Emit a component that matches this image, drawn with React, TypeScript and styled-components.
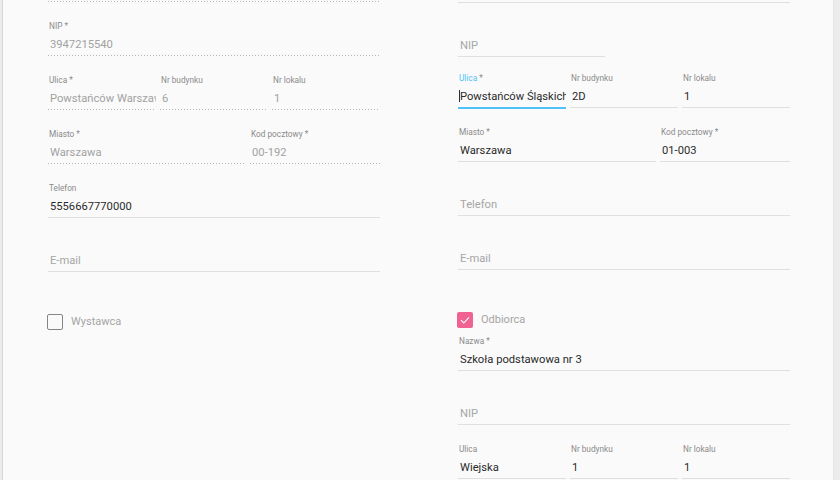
import React from 'react';
import styled, { createGlobalStyle, css } from 'styled-components';

const Global = createGlobalStyle`
  html, body { margin: 0; padding: 0; background: #ececec; }
  body { font-family: Roboto, "Helvetica Neue", Arial, sans-serif; }
  #root { height: 480px; overflow: hidden; }
`;

const Panel = styled.div`
  margin-left: 2px;
  width: 832px;
  height: 480px;
  box-sizing: border-box;
  background: #fafafa;
  border-left: 1px solid #d6d6d6;
  border-right: 1px solid #e4e4e4;
  padding-left: 45px;
  display: grid;
  grid-template-columns: 332px 332px;
  column-gap: 78px;
  align-content: start;
  overflow: hidden;
`;

const Column = styled.div`
  display: flex;
  flex-direction: column;
`;

type LineKind = 'solid' | 'dashed' | 'focus';

const lineStyles = {
  solid: css`
    background: #e0e0e0;
  `,
  dashed: css`
    background-image: linear-gradient(to right, rgba(0, 0, 0, 0.26) 0, rgba(0, 0, 0, 0.26) 50%, transparent 50%);
    background-size: 3px 1px;
    background-repeat: repeat-x;
  `,
  focus: css`
    background: #4fc3f7;
    box-shadow: 0 1px 0 #4fc3f7;
  `,
};

const Line = styled.div<{ $kind: LineKind }>`
  height: 1px;
  ${(p) => lineStyles[p.$kind]}
`;

const TopRule = styled(Line)<{ $top: number }>`
  margin-top: ${(p) => p.$top}px;
  margin-bottom: 17px;
`;

const Row = styled.div<{ $cols?: string; $mb?: number; $width?: number }>`
  display: grid;
  grid-template-columns: ${(p) => p.$cols ?? '1fr'};
  column-gap: 4px;
  margin-bottom: ${(p) => p.$mb ?? 17}px;
  width: ${(p) => (p.$width ? `${p.$width}px` : 'auto')};
`;

const FieldBox = styled.div`
  display: flex;
  flex-direction: column;
  min-width: 0;
`;

const Label = styled.div<{ $focused?: boolean }>`
  height: 12px;
  line-height: 12px;
  font-size: 8.25px;
  color: ${(p) => (p.$focused ? '#4fc3f7' : '#8a8a8a')};
  margin-top: 1px;
  margin-bottom: 3px;
  padding-left: 1px;
  white-space: nowrap;
`;

const Req = styled.span`
  color: #8a8a8a;
`;

type ValueKind = 'value' | 'disabled' | 'placeholder';

const Control = styled.div<{ $kind: ValueKind }>`
  height: 20px;
  line-height: 20px;
  font-size: 11.2px;
  padding-left: 2px;
  white-space: nowrap;
  overflow: hidden;
  color: ${(p) => (p.$kind === 'value' ? '#2a2a2a' : p.$kind === 'disabled' ? '#a2a2a2' : '#a6a6a6')};
`;

const Caret = styled.span`
  display: inline-block;
  width: 1px;
  height: 12px;
  background: #303030;
  vertical-align: middle;
  margin-top: -2px;
  margin-left: -1px;
`;

const CheckRow = styled.label`
  display: flex;
  align-items: center;
  gap: 8px;
  padding: 25px 0 6px;
  margin-left: -1px;
`;

const Box = styled.span<{ $checked?: boolean }>`
  width: 16px;
  height: 16px;
  box-sizing: border-box;
  border-radius: 2px;
  display: flex;
  align-items: center;
  justify-content: center;
  ${(p) =>
    p.$checked
      ? css`
          background: #f06292;
        `
      : css`
          border: 1.5px solid #858585;
        `}
`;

const CheckText = styled.span`
  font-size: 11px;
  line-height: 16px;
  color: #a4a4a4;
`;

type FieldProps = {
  label?: string;
  required?: boolean;
  value?: string;
  placeholder?: string;
  disabled?: boolean;
  focused?: boolean;
};

function Field({ label, required, value, placeholder, disabled, focused }: FieldProps) {
  const hasValue = value !== undefined;
  const kind: ValueKind = !hasValue ? 'placeholder' : disabled ? 'disabled' : 'value';
  const line: LineKind = focused ? 'focus' : disabled ? 'dashed' : 'solid';
  return (
    <FieldBox>
      <Label $focused={focused}>
        {hasValue || focused ? (
          <>
            {label}
            {required && <Req> *</Req>}
          </>
        ) : (
          '\u00a0'
        )}
      </Label>
      <Control $kind={kind}>
        {focused && <Caret />}
        {hasValue ? value : placeholder}
      </Control>
      <Line $kind={line} />
    </FieldBox>
  );
}

function Check({ checked, text }: { checked?: boolean; text: string }) {
  return (
    <CheckRow>
      <Box $checked={checked}>
        {checked && (
          <svg width="12" height="12" viewBox="0 0 12 12">
            <polyline points="2,6.2 4.8,9 10,3.4" fill="none" stroke="#fff" strokeWidth="1.1" />
          </svg>
        )}
      </Box>
      <CheckText>{text}</CheckText>
    </CheckRow>
  );
}

const THREE = '108px 108px 108px';
const TWO = '198px 130px';

export default function App() {
  return (
    <>
      <Global />
      <Panel>
        <Column>
          <TopRule $kind="dashed" $top={1} />
          <Row>
            <Field label="NIP" required value="3947215540" disabled />
          </Row>
          <Row $cols={THREE}>
            <Field label="Ulica" required value="Powstańców Warszawy" disabled />
            <Field label="Nr budynku" value="6" disabled />
            <Field label="Nr lokalu" value="1" disabled />
          </Row>
          <Row $cols={TWO}>
            <Field label="Miasto" required value="Warszawa" disabled />
            <Field label="Kod pocztowy" required value="00-192" disabled />
          </Row>
          <Row>
            <Field label="Telefon" value="5556667770000" />
          </Row>
          <Row>
            <Field label="E-mail" placeholder="E-mail" />
          </Row>
          <Check text="Wystawca" />
        </Column>
        <Column>
          <TopRule $kind="solid" $top={2} />
          <Row $width={147} $mb={14}>
            <Field label="NIP" placeholder="NIP" />
          </Row>
          <Row $cols={THREE}>
            <Field label="Ulica" required value="Powstańców Śląskich" focused />
            <Field label="Nr budynku" value="2D" />
            <Field label="Nr lokalu" value="1" />
          </Row>
          <Row $cols={TWO}>
            <Field label="Miasto" required value="Warszawa" />
            <Field label="Kod pocztowy" required value="01-003" />
          </Row>
          <Row>
            <Field label="Telefon" placeholder="Telefon" />
          </Row>
          <Row>
            <Field label="E-mail" placeholder="E-mail" />
          </Row>
          <Check checked text="Odbiorca" />
          <Row>
            <Field label="Nazwa" required value="Szkoła podstawowa nr 3" />
          </Row>
          <Row>
            <Field label="NIP" placeholder="NIP" />
          </Row>
          <Row $cols={THREE}>
            <Field label="Ulica" value="Wiejska" />
            <Field label="Nr budynku" value="1" />
            <Field label="Nr lokalu" value="1" />
          </Row>
        </Column>
      </Panel>
    </>
  );
}
